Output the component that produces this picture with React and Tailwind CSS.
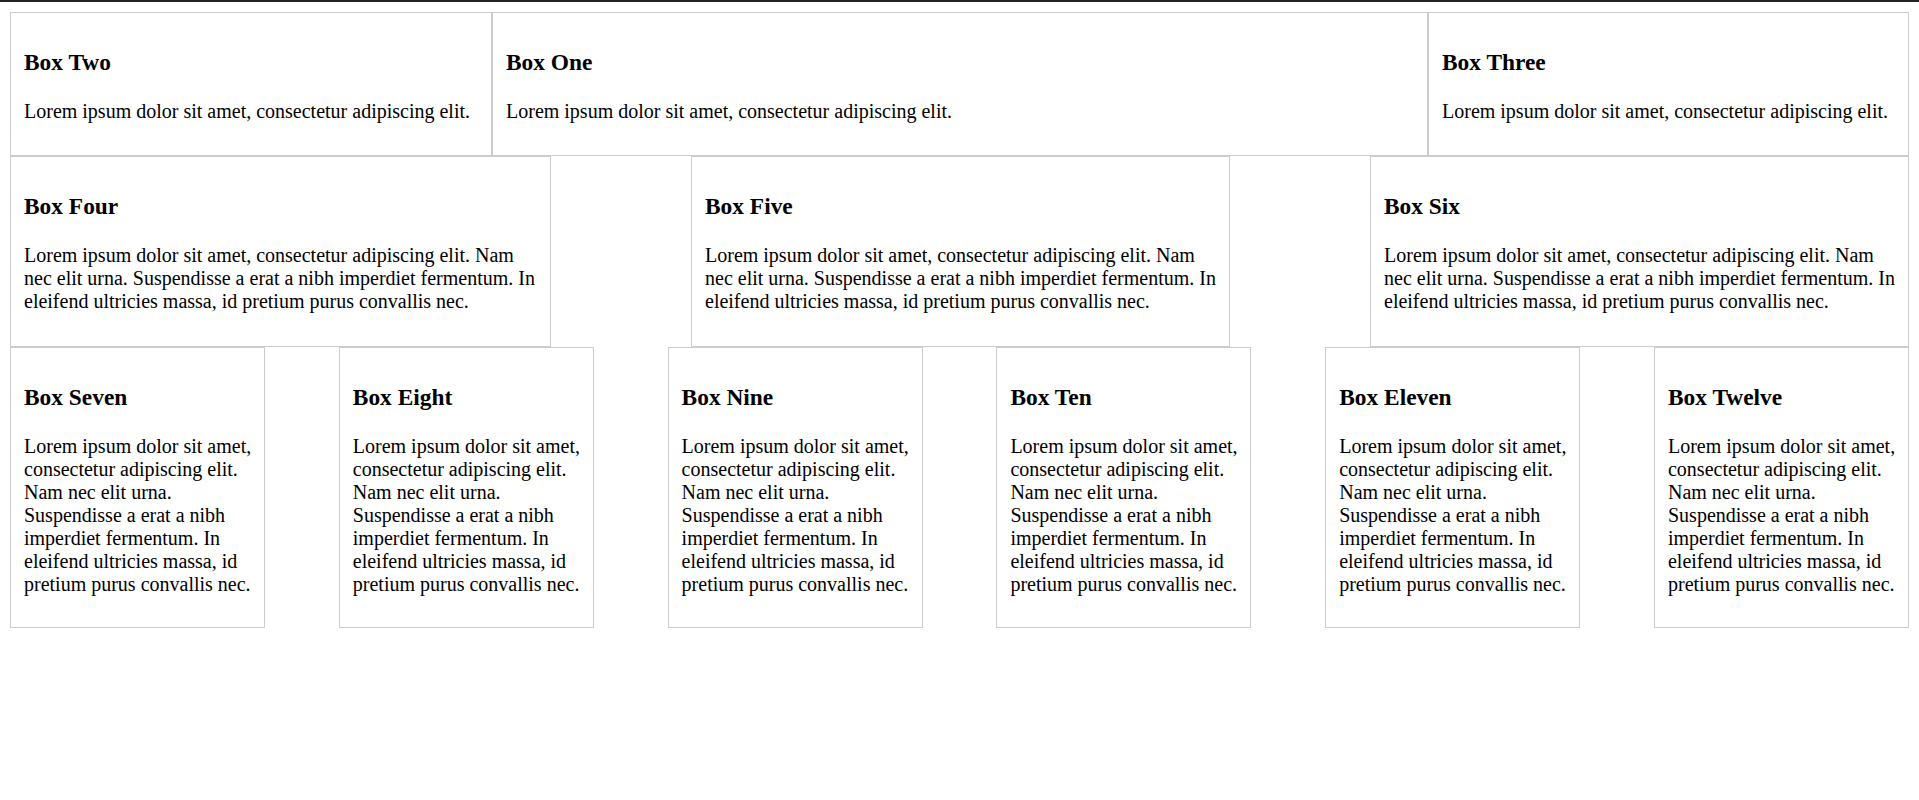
import React from 'react';

const shortText = "Lorem ipsum dolor sit amet, consectetur adipiscing elit.";
const longText =
  "Lorem ipsum dolor sit amet, consectetur adipiscing elit. Nam nec elit urna. Suspendisse a erat a nibh imperdiet fermentum. In eleifend ultricies massa, id pretium purus convallis nec.";

function Box({ title, text, className = "" }) {
  return (
    <div className={`border border-[#cccccc] pt-[13px] pl-[13px] pr-[11px] ${className}`}>
      <h3 className="mt-[23px] text-[23.4px] font-bold leading-[27px]">{title}</h3>
      <p className="mt-[24px] mb-[20px] text-[20px] leading-[23px]">{text}</p>
    </div>
  );
}

export default function App() {
  const bottom = ["Box Seven", "Box Eight", "Box Nine", "Box Ten", "Box Eleven", "Box Twelve"];

  return (
    <div
      className="min-h-[800px] border-t-2 border-[#222222] bg-white p-[10px] text-black"
      style={{ fontFamily: '"Liberation Serif", "Times New Roman", serif' }}
    >
      {/* first row: order demo */}
      <div className="flex">
        <Box title="Box Two" text={shortText} className="w-[482px] shrink-0 pb-[12px]" />
        <Box title="Box One" text={shortText} className="flex-1 pb-[12px]" />
        <Box title="Box Three" text={shortText} className="w-[481px] shrink-0 pb-[12px]" />
      </div>

      <div className="flex justify-between">
        <Box title="Box Four" text={longText} className="w-[541px] shrink-0 pb-[13px]" />
        <Box title="Box Five" text={longText} className="w-[539px] shrink-0 pb-[13px]" />
        <Box title="Box Six" text={longText} className="w-[539px] shrink-0 pb-[13px]" />
      </div>

      <div className="flex justify-between">
        {bottom.map((t) => (
          <Box key={t} title={t} text={longText} className="w-[255px] shrink-0 pb-[11px]" />
        ))}
      </div>
    </div>
  );
}
